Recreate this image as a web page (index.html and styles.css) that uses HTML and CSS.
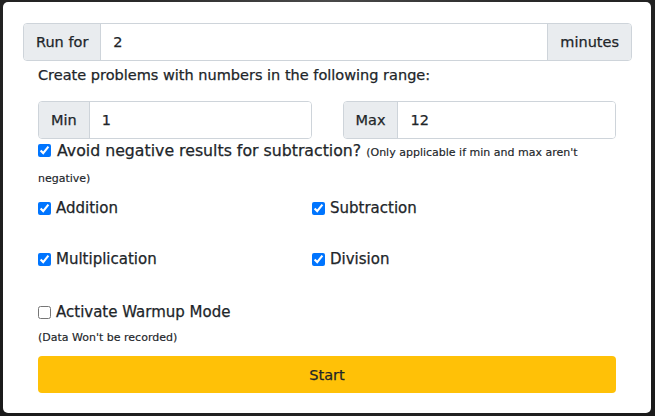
FILE: index.html
```html
<!DOCTYPE html>
<html>
<head>
<meta charset="utf-8">
<link rel="stylesheet" href="styles.css">
</head>
<body>
<div class="modal">
  <div class="input-group">
    <span class="addon">Run for</span>
    <input class="field" type="text" value="2">
    <span class="addon">minutes</span>
  </div>
  <div class="content">
    <p class="range-label">Create problems with numbers in the following range:</p>
    <div class="range-row">
      <div class="input-group">
        <span class="addon">Min</span>
        <input class="field" type="text" value="1">
      </div>
      <div class="input-group">
        <span class="addon">Max</span>
        <input class="field" type="text" value="12">
      </div>
    </div>
    <label class="avoid">
      <input type="checkbox" checked> Avoid negative results for subtraction? <small>(Only applicable if min and max aren't negative)</small>
    </label>
    <div class="ops">
      <label class="check"><input type="checkbox" checked><span>Addition</span></label>
      <label class="check"><input type="checkbox" checked><span>Subtraction</span></label>
      <label class="check"><input type="checkbox" checked><span>Multiplication</span></label>
      <label class="check"><input type="checkbox" checked><span>Division</span></label>
    </div>
    <label class="check warmup"><input type="checkbox"><span>Activate Warmup Mode</span></label>
    <p class="note">(Data Won't be recorded)</p>
    <button class="start">Start</button>
  </div>
</div>
</body>
</html>
```
FILE: styles.css
```css
* { box-sizing: border-box; }
html, body { height: 100%; }
body {
  margin: 0;
  background: radial-gradient(ellipse at 50% 0%, #4a4a4a 0%, #2a2a2a 40%, #1a1a1a 100%);
  font-family: "DejaVu Sans", sans-serif;
  font-size: 14.5px;
  color: #212529;
  padding: 2px 4px 3px 3px;
  -webkit-text-stroke: 0.25px #212529;
}
.modal {
  background: #fff;
  border-radius: 5px;
  padding: 21px 19px 20px 20px;
  height: 411px;
}
.input-group {
  display: flex;
  height: 38px;
  border: 1px solid #ced4da;
  border-radius: 4px;
  overflow: hidden;
}
.addon {
  background: #e9ecef;
  padding: 0 12px;
  display: flex;
  align-items: center;
  white-space: nowrap;
}
.input-group .addon:first-child { border-right: 1px solid #ced4da; }
.input-group .addon:last-child:not(:first-child) { border-left: 1px solid #ced4da; }
.field {
  flex: 1;
  min-width: 0;
  border: 0;
  padding: 0 12px;
  font: inherit;
  color: #212529;
  outline: none;
}
.content { padding: 0 16px 0 15px; }
.range-label {
  margin: 0;
  line-height: 24px;
  padding-top: 2px;
}
.range-row {
  display: grid;
  grid-template-columns: 1fr 1fr;
  column-gap: 31px;
  margin-top: 14px;
}
.check {
  display: flex;
  align-items: flex-start;
  line-height: 24px;
  font-size: 15px;
}
.check input {
  margin: 6px 5px 0 0;
  width: 13px;
  height: 13px;
  flex: none;
}
.avoid {
  display: block;
  margin-top: 0;
  line-height: 24px;
  font-size: 15.75px;
}
.avoid input {
  margin: 0 1px 0 0;
  width: 13px;
  height: 13px;
  vertical-align: -1px;
}
.avoid small { font-size: 11px; -webkit-text-stroke: 0.15px #212529; }
.ops {
  display: grid;
  grid-template-columns: 274px 1fr;
  grid-auto-rows: 51px;
  margin-top: 5px;
}
.warmup { margin-top: 2px; }
.note {
  margin: 5px 0 0;
  font-size: 11px;
  line-height: 18px;
  -webkit-text-stroke: 0.15px #212529;
}
.start {
  display: block;
  width: 100%;
  height: 37px;
  margin-top: 9px;
  background: #ffc107;
  border: 0;
  border-radius: 4px;
  font: inherit;
  color: #212529;
}
```
